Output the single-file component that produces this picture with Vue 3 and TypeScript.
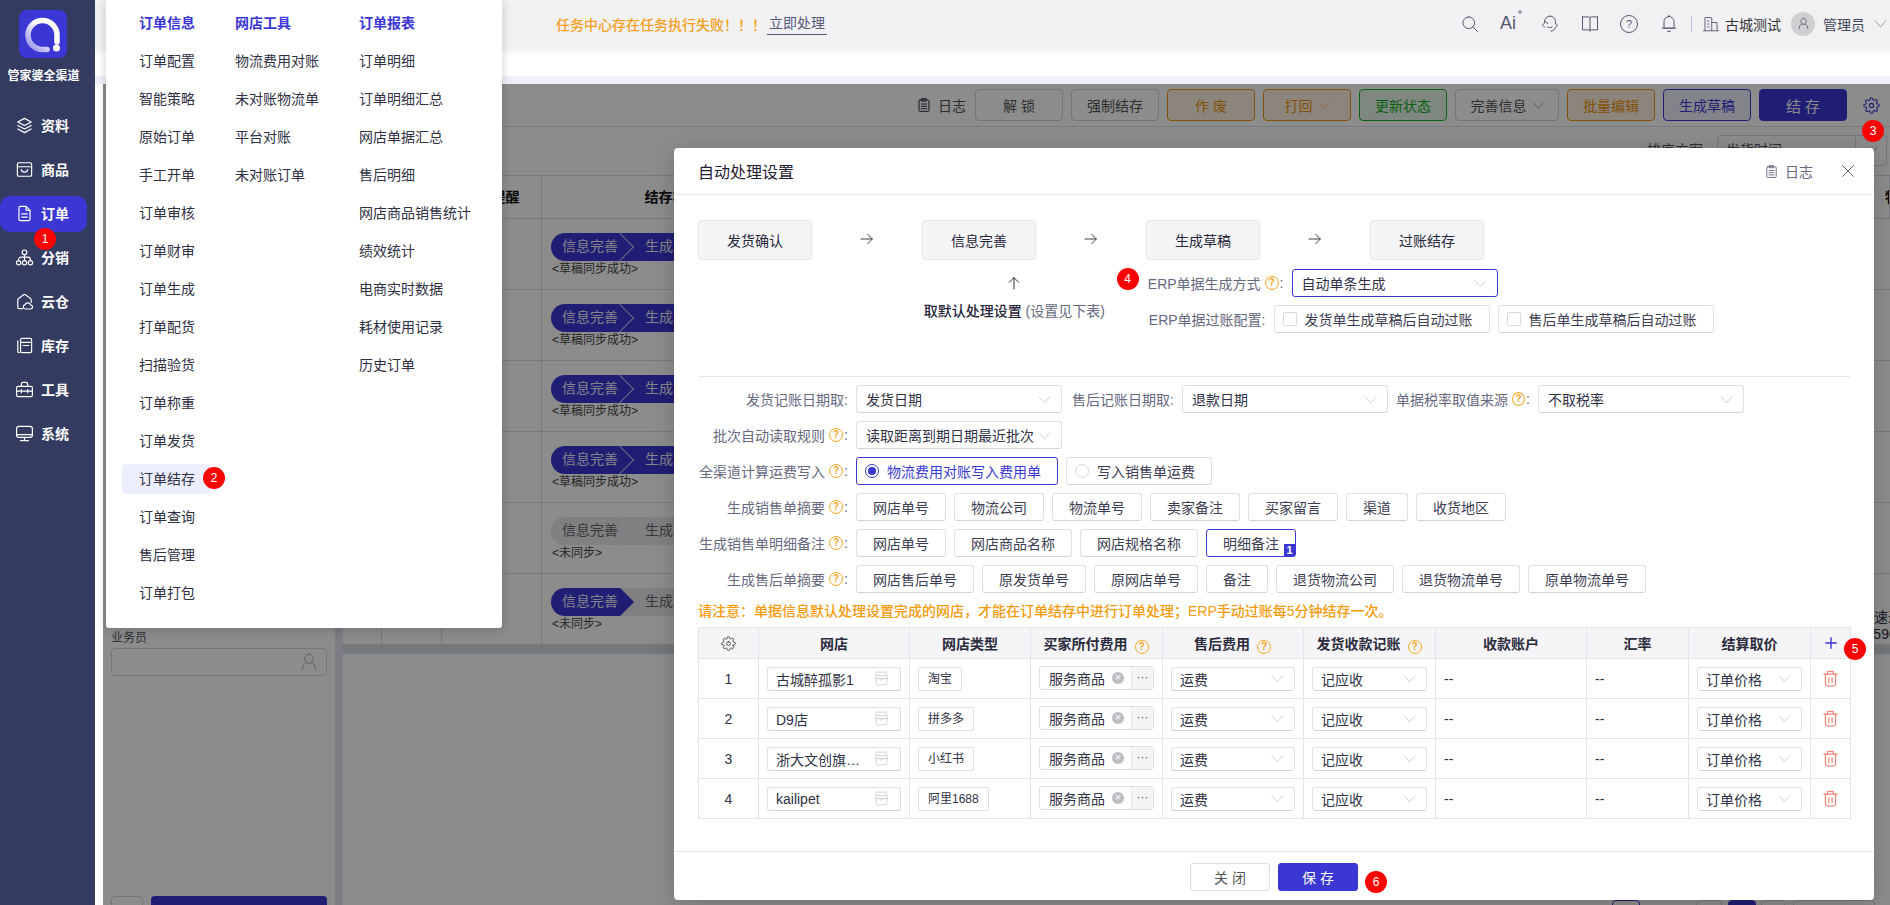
<script setup lang="ts">
import { ref } from 'vue';

const icons: Record<string, string> = {
  layers: 'M12 3 3.5 7.5 12 12l8.5-4.5L12 3Z M3.5 12 12 16.5 20.5 12 M3.5 16.5 12 21l8.5-4.5',
  goods: 'M5 3.500h14a2 2 0 0 1 2 2v13a2 2 0 0 1-2 2H5a2 2 0 0 1-2-2v-13a2 2 0 0 1 2-2Z M3 8.500h18 M8 12c.6 4.500 7.400 4.500 8 0',
  order: 'M7 3h7l5 5v11a2 2 0 0 1-2 2H7a2 2 0 0 1-2-2V5a2 2 0 0 1 2-2Z M14 3v5h5 M8.500 12.500h7 M8.500 16.500h7',
  org: 'M12 2.500a3 3 0 1 1 0 6 3 3 0 0 1 0-6Z M12 8.500v7.500 M4.500 16v-1.500a3 3 0 0 1 3-3h9a3 3 0 0 1 3 3V16 M4.500 16a2.700 2.700 0 1 1 0 5.400 2.700 2.700 0 0 1 0-5.400Z M12 16a2.700 2.700 0 1 1 0 5.400 2.700 2.700 0 0 1 0-5.400Z M19.500 16a2.700 2.700 0 1 1 0 5.400 2.700 2.700 0 0 1 0-5.400Z',
  cloud: 'M9.500 21H5.500a2 2 0 0 1-2-2V10a2 2 0 0 1 .8-1.600l6.500-5a2 2 0 0 1 2.400 0l6.500 5a2 2 0 0 1 .8 1.600v3 M13 21.500h6.500a2.500 2.500 0 0 0 .3-5 3.800 3.800 0 0 0-7.200-.5 2.800 2.800 0 0 0 .4 5.500Z',
  stock: 'M9 3h10a2 2 0 0 1 2 2v14a2 2 0 0 1-2 2H9a2 2 0 0 1-2-2V5a2 2 0 0 1 2-2Z M3.500 6v13a2 2 0 0 0 2 2 M7 8h14 M10.500 12h7',
  tool: 'M4 8h16a2 2 0 0 1 2 2v9a2 2 0 0 1-2 2H4a2 2 0 0 1-2-2v-9a2 2 0 0 1 2-2Z M8 8V5a2 2 0 0 1 2-2h4a2 2 0 0 1 2 2v3 M2 14h20 M8 12v4 M16 12v4',
  monitor: 'M5 3h14a3 3 0 0 1 3 3v8a3 3 0 0 1-3 3H5a3 3 0 0 1-3-3V6a3 3 0 0 1 3-3Z M2.500 13.500h19 M7 21h10 M12 17v4',
  search: 'M10.500 3.500a7 7 0 1 1 0 14 7 7 0 0 1 0-14Z M15.500 15.500 21 21',
  spark: 'M18 2.500v7 M14.500 6h7',
  headset: 'M12 2.500a6.500 6.500 0 0 1 6.500 6.500v2.500c1.300.3 2 1.100 2 2.200s-.9 2.100-2 2.300c-.8 3-3 4.500-5.500 4.500 M12 2.500A6.500 6.500 0 0 0 5.500 9c1.500 0 3 1 3.500 2.500 M5.500 9v2c-1.300.3-2 1.200-2 2.300s.9 2 2 2.200 M9 15.500c1.500 1.200 4 1.200 5.500 0',
  book: 'M3 3.500h7.500c.9 0 1.500.6 1.500 1.500v15.500c0-1-.7-1.500-1.500-1.500H3V3.500Z M21 3.500h-7.500c-.9 0-1.500.6-1.500 1.500 M21 3.500V19h-7.500c-.8 0-1.500.5-1.500 1.500',
  bell: 'M12 3a6 6 0 0 1 6 6v8H6V9a6 6 0 0 1 6-6Z M4 17h16 M10 20.500c.8 1 3.200 1 4 0 M12 1.500V3',
  building: 'M4 21V3.500h9V21 M2 21h20 M13 10h7v11 M7.500 8h2 M7.500 12h2 M7.500 16h2',
  user: 'M12 2.500c2.800 0 5 2.300 5 5.500s-2.200 5.500-5 5.500S7 11.200 7 8s2.200-5.500 5-5.500Z M9 13c-3 1-5 3.500-5 8.500 M15 13c3 1 5 3.500 5 8.500',
  gear: 'M12 9a3 3 0 1 0 0 6 3 3 0 0 0 0-6Z M19.400 15a1.650 1.650 0 0 0 .33 1.820l.06.06a2 2 0 1 1-2.830 2.830l-.06-.06a1.650 1.650 0 0 0-2.800 1.170V21a2 2 0 0 1-4 0v-.09a1.650 1.650 0 0 0-2.800-1.120l-.06.06a2 2 0 1 1-2.830-2.830l.06-.06a1.650 1.650 0 0 0-1.170-2.800H3a2 2 0 0 1 0-4h.09a1.650 1.650 0 0 0 1.120-2.800l-.06-.06a2 2 0 1 1 2.830-2.830l.06.06a1.650 1.650 0 0 0 2.800-1.170V3a2 2 0 0 1 4 0v.09a1.650 1.650 0 0 0 2.800 1.120l.06-.06a2 2 0 1 1 2.830 2.830l-.06.06a1.650 1.650 0 0 0 1.170 2.800H21a2 2 0 0 1 0 4h-.09a1.650 1.650 0 0 0-1.510 1.160Z',
  log: 'M6 4.500h12a1.500 1.500 0 0 1 1.500 1.500v14a1.500 1.500 0 0 1-1.500 1.500H6A1.500 1.500 0 0 1 4.500 20V6A1.500 1.500 0 0 1 6 4.500Z M9 2.500h6v3.500H9z M8 10.500h8 M8 14h8 M8 17.500h8',
  close: 'M4 4l16 16 M20 4 4 20',
  right: 'M3 12h17 M13 5l7 7-7 7',
  up: 'M12 21V4 M5 11l7-7 7 7',
  shop: 'M6.500 3h11a2 2 0 0 1 2 2v3H4.500V5a2 2 0 0 1 2-2Z M4.500 8 3 12h18l-1.500-4 M4.500 12v7a2 2 0 0 0 2 2h11a2 2 0 0 0 2-2v-7 M9 12c.3 3 5.700 3 6 0',
  trash: 'M3.500 6.500h17 M8.500 6.500V3h7v3.500 M5.500 6.500V19a2.500 2.500 0 0 0 2.500 2.500h8a2.500 2.500 0 0 0 2.500-2.500V6.500 M10 11v6 M14 11v6',
  plus: 'M12 3v18 M3 12h18',
  chev: 'M2 7l10 11L22 7',
};

const menuCols = [
  { title: '订单信息', items: ['订单配置', '智能策略', '原始订单', '手工开单', '订单审核', '订单财审', '订单生成', '打单配货', '扫描验货', '订单称重', '订单发货', '订单结存', '订单查询', '售后管理', '订单打包'] },
  { title: '网店工具', items: ['物流费用对账', '未对账物流单', '平台对账', '未对账订单'] },
  { title: '订单报表', items: ['订单明细', '订单明细汇总', '网店单据汇总', '售后明细', '网店商品销售统计', '绩效统计', '电商实时数据', '耗材使用记录', '历史订单'] },
];

const nav = [
  { label: '资料', icon: 'layers' },
  { label: '商品', icon: 'goods' },
  { label: '订单', icon: 'order', active: true },
  { label: '分销', icon: 'org' },
  { label: '云仓', icon: 'cloud' },
  { label: '库存', icon: 'stock' },
  { label: '工具', icon: 'tool' },
  { label: '系统', icon: 'monitor' },
];

const actions = [
  { label: '解 锁', kind: 'plain' },
  { label: '强制结存', kind: 'plain' },
  { label: '作 废', kind: 'warn' },
  { label: '打回', kind: 'warn', caret: true },
  { label: '更新状态', kind: 'ok' },
  { label: '完善信息', kind: 'plain', caret: true, wide: true },
  { label: '批量编辑', kind: 'warn' },
  { label: '生成草稿', kind: 'line' },
  { label: '结 存', kind: 'solid' },
];

const bgRows = [
  { state: 'done', note: '<草稿同步成功>' },
  { state: 'done', note: '<草稿同步成功>' },
  { state: 'done', note: '<草稿同步成功>' },
  { state: 'done', note: '<草稿同步成功>' },
  { state: 'idle', note: '<未同步>' },
  { state: 'half', note: '<未同步>' },
];

const flowSteps = ['发货确认', '信息完善', '生成草稿', '过账结存'];

const chipRows = [
  { label: '生成销售单摘要', items: ['网店单号', '物流公司', '物流单号', '卖家备注', '买家留言', '渠道', '收货地区'], picked: '' },
  { label: '生成销售单明细备注', items: ['网店单号', '网店商品名称', '网店规格名称', '明细备注'], picked: '明细备注' },
  { label: '生成售后单摘要', items: ['网店售后单号', '原发货单号', '原网店单号', '备注', '退货物流公司', '退货物流单号', '原单物流单号'], picked: '' },
];

const shops = ref([
  { no: 1, name: '古城醉孤影1', type: '淘宝' },
  { no: 2, name: 'D9店', type: '拼多多' },
  { no: 3, name: '浙大文创旗舰店', type: '小红书' },
  { no: 4, name: 'kailipet', type: '阿里1688' },
]);
</script>

<template>
  <div class="app">
    <aside class="side">
      <div class="logo">
        <svg viewBox="0 0 48 48" width="48" height="48">
          <defs>
            <linearGradient id="ring" x1="0" y1="1" x2="1" y2="0">
              <stop offset="0" stop-color="#8f8ce6" />
              <stop offset=".6" stop-color="#fff" />
            </linearGradient>
          </defs>
          <path d="M38 32V25A14.500 14.500 0 1 0 23.500 39.500H28" fill="none" stroke="url(#ring)" stroke-width="5.500" stroke-linecap="round" />
          <circle cx="37.500" cy="38" r="3.500" fill="#fff" />
        </svg>
      </div>
      <div class="brand">管家婆全渠道</div>
      <nav class="nav">
        <div v-for="n in nav" :key="n.label" class="nav-item" :class="{ active: n.active }">
          <svg class="ic nav-ic" viewBox="0 0 24 24"><path :d="icons[n.icon]" /></svg>
          <span>{{ n.label }}</span>
        </div>
      </nav>
    </aside>

    <div class="main">
      <header class="topbar">
        <div class="alert">任务中心存在任务执行失败！！！</div>
        <a class="alert-link">立即处理</a>
        <div class="top-right">
          <svg class="ic top-ic" viewBox="0 0 24 24"><path :d="icons.search" /></svg>
          <span class="ai">Ai<svg class="ic spark" viewBox="0 0 24 24"><path :d="icons.spark" /></svg></span>
          <svg class="ic top-ic" viewBox="0 0 24 24"><path :d="icons.headset" /></svg>
          <svg class="ic top-ic" viewBox="0 0 24 24"><path :d="icons.book" /></svg>
          <span class="help-big">?</span>
          <svg class="ic top-ic bell" viewBox="0 0 24 24"><path :d="icons.bell" /></svg>
          <span class="top-div"></span>
          <svg class="ic org-ic" viewBox="0 0 24 24"><path :d="icons.building" /></svg>
          <span class="org-name">古城测试</span>
          <span class="avatar"><svg class="ic" viewBox="0 0 24 24"><path :d="icons.user" /></svg></span>
          <span class="user-name">管理员</span>
          <svg class="ic chev user-chev" viewBox="0 0 24 24"><path :d="icons.chev" /></svg>
        </div>
      </header>
      <div class="tabs"></div>
      <div class="strip"></div>

      <div class="work">
        <section class="filters">
          <div class="f-label">业务员</div>
          <div class="f-input"><svg class="ic" viewBox="0 0 24 24"><path :d="icons.user" /></svg></div>
          <div class="f-actions">
            <span class="f-small"></span>
            <span class="f-query"></span>
          </div>
        </section>
        <div class="splitter"></div>
        <section class="board">
          <div class="toolbar">
            <svg class="ic log-ic" viewBox="0 0 24 24"><path :d="icons.log" /></svg>
            <span class="log-text">日志</span>
            <button v-for="a in actions" :key="a.label" class="act" :class="[a.kind, { wide: a.wide }]">
              {{ a.label }}
              <svg v-if="a.caret" class="ic chev act-chev" viewBox="0 0 24 24"><path :d="icons.chev" /></svg>
            </button>
            <svg class="ic gear" viewBox="0 0 24 24"><path :d="icons.gear" /></svg>
          </div>
          <div class="sortbar">
            <span>排序方案</span>
            <div class="sort-sel"><span>发货时间</span></div>
            <div class="sort-add"><svg class="ic chev" viewBox="0 0 24 24"><path :d="icons.chev" /></svg></div>
          </div>
          <div class="grid-head grid-cols">
            <div></div><div></div>
            <div class="gh">异常提醒</div>
            <div class="gh">结存状态</div>
            <div></div>
            <div class="gh gh-last">物流信息</div>
          </div>
          <div v-for="(r, i) in bgRows" :key="i" class="grid-row grid-cols">
            <div></div><div></div><div></div>
            <div class="state-cell">
              <div class="pill" :class="r.state">
                <span class="seg first">信息完善</span>
                <span class="seg next">生成草稿</span>
              </div>
              <div class="pill-note">{{ r.note }}</div>
            </div>
            <div></div>
            <div class="last-cell">
              <template v-if="i === 5">
                <div>中通速递</div>
                <div class="last-num">7895901</div>
              </template>
            </div>
          </div>
          <div class="hscroll"></div>
          <div class="pager">
            <span class="pg pg-line"></span>
            <span class="pg pg-gray"></span>
            <span class="pg pg-solid"></span>
            <span class="pg pg-gray2"></span>
            <span class="pg pg-size"></span>
          </div>
        </section>
        <div class="mask"></div>
      </div>
    </div>

    <!-- dropdown from the side nav -->
    <div class="menu">
      <div v-for="c in menuCols" :key="c.title" class="menu-col">
        <div class="menu-title">{{ c.title }}</div>
        <div v-for="m in c.items" :key="m" class="menu-item" :class="{ picked: m === '订单结存' }">{{ m }}</div>
      </div>
    </div>

    <div class="modal">
      <div class="m-head">
        <span class="m-title">自动处理设置</span>
        <svg class="ic m-log" viewBox="0 0 24 24"><path :d="icons.log" /></svg>
        <span class="m-log-text">日志</span>
        <svg class="ic m-close" viewBox="0 0 24 24"><path :d="icons.close" /></svg>
      </div>

      <div class="m-body">
        <div class="flow">
          <template v-for="(s, i) in flowSteps" :key="s">
            <div class="flow-box">{{ s }}</div>
            <div v-if="i < 3" class="flow-arrow"><svg class="ic" viewBox="0 0 24 24"><path :d="icons.right" /></svg></div>
          </template>
        </div>
        <div class="flow-sub">
          <div class="default-col">
            <svg class="ic up" viewBox="0 0 24 24"><path :d="icons.up" /></svg>
            <div class="default-text"><b>取默认处理设置</b> (设置见下表)</div>
          </div>
          <div class="erp">
            <div class="erp-row">
              <span class="lab erp-lab1">ERP单据生成方式<i class="help">?</i>:</span>
              <div class="sel sel-on erp-sel">自动单条生成<svg class="ic chev" viewBox="0 0 24 24"><path :d="icons.chev" /></svg></div>
              <span class="badge b4">4</span>
            </div>
            <div class="erp-row">
              <span class="lab erp-lab2">ERP单据过账配置:</span>
              <label class="chip check"><i class="box"></i>发货单生成草稿后自动过账</label>
              <label class="chip check"><i class="box"></i>售后单生成草稿后自动过账</label>
            </div>
          </div>
        </div>
        <div class="rule"></div>

        <div class="form-row">
          <span class="lab w-main">发货记账日期取:</span>
          <div class="sel w-sel">发货日期<svg class="ic chev" viewBox="0 0 24 24"><path :d="icons.chev" /></svg></div>
          <span class="lab w-b">售后记账日期取:</span>
          <div class="sel w-sel">退款日期<svg class="ic chev" viewBox="0 0 24 24"><path :d="icons.chev" /></svg></div>
          <span class="lab w-c">单据税率取值来源<i class="help">?</i>:</span>
          <div class="sel w-sel">不取税率<svg class="ic chev" viewBox="0 0 24 24"><path :d="icons.chev" /></svg></div>
        </div>
        <div class="form-row">
          <span class="lab w-main">批次自动读取规则<i class="help">?</i>:</span>
          <div class="sel w-sel">读取距离到期日期最近批次<svg class="ic chev" viewBox="0 0 24 24"><path :d="icons.chev" /></svg></div>
        </div>
        <div class="form-row">
          <span class="lab w-main">全渠道计算运费写入<i class="help">?</i>:</span>
          <label class="chip radio on"><i class="dot"></i>物流费用对账写入费用单</label>
          <label class="chip radio"><i class="dot"></i>写入销售单运费</label>
        </div>
        <div v-for="row in chipRows" :key="row.label" class="form-row">
          <span class="lab w-main">{{ row.label }}<i class="help">?</i>:</span>
          <span v-for="c in row.items" :key="c" class="chip" :class="{ on: c === row.picked }">
            {{ c }}<em v-if="c === row.picked" class="corner">1</em>
          </span>
        </div>

        <p class="notice">请注意：单据信息默认处理设置完成的网店，才能在订单结存中进行订单处理；ERP手动过账每5分钟结存一次。</p>

        <table class="shops">
          <colgroup>
            <col style="width: 60px" /><col style="width: 151px" /><col style="width: 121px" /><col style="width: 132px" /><col style="width: 141px" />
            <col style="width: 132px" /><col style="width: 151px" /><col style="width: 102px" /><col style="width: 122px" /><col style="width: 40px" />
          </colgroup>
          <thead>
            <tr>
              <th><svg class="ic th-gear" viewBox="0 0 24 24"><path :d="icons.gear" /></svg></th>
              <th>网店</th>
              <th>网店类型</th>
              <th>买家所付费用<i class="help th-help">?</i></th>
              <th>售后费用<i class="help th-help">?</i></th>
              <th>发货收款记账<i class="help th-help">?</i></th>
              <th>收款账户</th>
              <th>汇率</th>
              <th>结算取价</th>
              <th class="plus-th">
                <svg class="ic plus" viewBox="0 0 24 24"><path :d="icons.plus" /></svg>
                <span class="badge b5">5</span>
              </th>
            </tr>
          </thead>
          <tbody>
            <tr v-for="s in shops" :key="s.no">
              <td class="ctr">{{ s.no }}</td>
              <td>
                <div class="sel t-sel">
                  <span class="ell">{{ s.name }}</span>
                  <svg class="ic shop" viewBox="0 0 24 24"><path :d="icons.shop" /></svg>
                </div>
              </td>
              <td><span class="type-tag">{{ s.type }}</span></td>
              <td>
                <div class="fee">
                  <span class="fee-text">服务商品</span>
                  <span class="clear">×</span>
                  <span class="more">···</span>
                </div>
              </td>
              <td><div class="sel t-sel">运费<svg class="ic chev" viewBox="0 0 24 24"><path :d="icons.chev" /></svg></div></td>
              <td><div class="sel t-sel">记应收<svg class="ic chev" viewBox="0 0 24 24"><path :d="icons.chev" /></svg></div></td>
              <td>--</td>
              <td>--</td>
              <td><div class="sel t-sel">订单价格<svg class="ic chev" viewBox="0 0 24 24"><path :d="icons.chev" /></svg></div></td>
              <td class="ctr"><svg class="ic trash" viewBox="0 0 24 24"><path :d="icons.trash" /></svg></td>
            </tr>
          </tbody>
        </table>
      </div>

      <div class="m-foot">
        <button class="f-btn">关 闭</button>
        <button class="f-btn primary">保 存<span class="badge b6">6</span></button>
      </div>
    </div>

    <span class="badge b1">1</span>
    <span class="badge b2">2</span>
    <span class="badge b3">3</span>
  </div>
</template>

<style>
html,
body {
  margin: 0;
  overflow: hidden;
}
</style>

<style scoped>
.app {
  position: relative;
  display: flex;
  width: 1890px;
  height: 905px;
  overflow: hidden;
  font-family: "Liberation Sans", "Noto Sans CJK SC", sans-serif;
  font-size: 14px;
  color: #2f3044;
  background: #fff;
}
.ic {
  display: block;
  width: 16px;
  height: 16px;
  fill: none;
  stroke: currentColor;
  stroke-width: 1.6;
  stroke-linecap: round;
  stroke-linejoin: round;
  flex: none;
}
.chev {
  width: 13px;
  height: 13px;
  stroke-width: 1.2;
  color: #b9bac4;
}
i,
em {
  font-style: normal;
}

/* side nav */
.side {
  width: 95px;
  flex: none;
  background: #333b61;
  color: #fff;
  padding-right: 8px;
  box-sizing: border-box;
}
.logo {
  width: 48px;
  height: 48px;
  margin: 10px 0 0 19px;
  background: #3a37d4;
  border-radius: 8px;
}
.brand {
  margin-top: 12px;
  text-align: center;
  font-size: 12px;
  font-weight: 700;
  line-height: 12px;
}
.nav {
  margin-top: 26px;
  display: flex;
  flex-direction: column;
  gap: 8px;
}
.nav-item {
  height: 36px;
  box-sizing: border-box;
  display: flex;
  align-items: center;
  gap: 7px;
  padding: 0 0 2px 15px;
  border-radius: 10px;
  font-weight: 700;
}
.nav-item.active {
  background: #3a37d4;
}
.nav-ic {
  width: 19px;
  height: 19px;
  stroke-width: 1.5;
}

/* top */
.main {
  flex: 1;
  min-width: 0;
  display: flex;
  flex-direction: column;
}
.topbar {
  height: 47px;
  flex: none;
  display: flex;
  align-items: center;
  background: #f1f1f4;
  padding-left: 461px;
  padding-right: 3px;
}
.alert {
  color: #f5a01c;
  font-size: 14px;
  width: 211px;
  font-weight: 500;
  white-space: nowrap;
}
.alert-link {
  color: #56587a;
  width: 60px;
  line-height: 21px;
  margin-top: 1px;
  text-align: center;
  border-bottom: 1px solid #56587a;
}
.top-right {
  margin-left: auto;
  display: flex;
  align-items: center;
  color: #555770;
}
.top-ic {
  width: 20px;
  height: 20px;
  stroke-width: 1.2;
  margin-right: 20px;
}
.top-ic.bell {
  margin-right: 12px;
}
.ai {
  position: relative;
  font-size: 18px;
  width: 40px;
  color: #555770;
}
.spark {
  position: absolute;
  left: 11px;
  top: -4px;
  width: 12px;
  height: 12px;
  stroke-width: 1.6;
}
.help-big {
  width: 16px;
  height: 16px;
  border: 1.2px solid #555770;
  border-radius: 50%;
  font-size: 11px;
  line-height: 16px;
  text-align: center;
  margin-right: 21px;
}
.top-div {
  width: 1px;
  height: 16px;
  background: #b8bce0;
  margin-right: 10px;
}
.org-ic {
  width: 18px;
  height: 18px;
  stroke-width: 1.2;
  margin-right: 5px;
}
.org-name {
  color: #333;
  margin-right: 10px;
}
.avatar {
  width: 24px;
  height: 24px;
  border-radius: 50%;
  background: #cfcfd2;
  display: flex;
  align-items: center;
  justify-content: center;
  margin-right: 8px;
}
.avatar .ic {
  width: 13px;
  height: 13px;
  stroke-width: 1.5;
}
.user-name {
  color: #44465c;
  margin-right: 9px;
}
.user-chev {
  color: #777;
}
.tabs {
  height: 29px;
  flex: none;
  background: linear-gradient(#f1f1f4, #fff 8px);
}
.strip {
  height: 8px;
  flex: none;
  background: #eef0fd;
}

/* page behind the mask */
.work {
  position: relative;
  flex: 1;
  min-height: 0;
  display: flex;
  margin-left: 8px;
  background: #fff;
}
.mask {
  position: absolute;
  inset: 0;
  z-index: 2;
  background: rgba(0, 0, 0, 0.45);
}
.filters {
  width: 232px;
  flex: none;
  box-sizing: border-box;
  padding: 545px 8px 0;
  display: flex;
  flex-direction: column;
}
.f-label {
  flex: none;
  font-size: 12px;
  line-height: 18px;
  color: #555;
  margin-bottom: 1px;
}
.f-input {
  height: 28px;
  flex: none;
  box-sizing: border-box;
  border: 1px solid #d8d8de;
  border-radius: 4px;
  display: flex;
  align-items: center;
  justify-content: flex-end;
  padding-right: 7px;
  color: #aaa;
}
.f-input .ic {
  width: 20px;
  height: 20px;
  stroke-width: 1.1;
}
.f-actions {
  margin-top: 220px;
  flex: none;
  display: flex;
  gap: 8px;
}
.f-small {
  width: 32px;
  height: 32px;
  box-sizing: border-box;
  border: 1px solid #d8d8de;
  border-radius: 4px;
}
.f-query {
  flex: 1;
  height: 32px;
  background: #3a37d4;
  border-radius: 4px;
}
.splitter {
  width: 8px;
  flex: none;
  background: #e3e3f2;
}
.board {
  flex: 1;
  min-width: 0;
  display: flex;
  flex-direction: column;
}
.toolbar {
  height: 43px;
  flex: none;
  box-sizing: border-box;
  display: flex;
  align-items: center;
  justify-content: flex-end;
  gap: 8px;
  padding-right: 10px;
  border-bottom: 1px solid #dcdce4;
}
.log-ic {
  stroke-width: 1.5;
  margin-right: -2px;
}
.log-text {
  margin-right: 1px;
  color: #555;
}
.act {
  width: 88px;
  height: 32px;
  padding: 0;
  display: inline-flex;
  align-items: center;
  justify-content: center;
  gap: 6px;
  font: inherit;
  border-radius: 4px;
  border: 1px solid #d4d4dc;
  background: #fff;
  color: #555;
}
.act.wide {
  width: 104px;
}
.act.warn {
  border-color: #ee9310;
  color: #ee9310;
  background: #fdf2e0;
}
.act.ok {
  border-color: #17b425;
  color: #14b01f;
  background: #e6f8ea;
}
.act.line {
  border-color: #3a37d4;
  color: #3a37d4;
  background: #eeeefc;
}
.act.solid {
  border-color: #3a37d4;
  color: #fff;
  background: #3a37d4;
  font-size: 15px;
}
.act-chev {
  color: inherit;
  width: 11px;
  height: 11px;
}
.gear {
  width: 17px;
  height: 17px;
  color: #3a37d4;
  stroke-width: 1.5;
  margin-left: 8px;
}
.sortbar {
  height: 49px;
  flex: none;
  box-sizing: border-box;
  display: flex;
  align-items: flex-start;
  justify-content: flex-end;
  padding: 8px 3px 0 0;
  border-bottom: 1px solid #dcdce4;
  color: #555;
}
.sortbar > span {
  line-height: 31px;
  margin-right: 14px;
}
.sort-sel {
  width: 139px;
  height: 31px;
  box-sizing: border-box;
  border: 1px solid #d8d8de;
  border-radius: 4px 0 0 4px;
  padding-left: 8px;
  line-height: 29px;
}
.sort-add {
  width: 31px;
  height: 31px;
  box-sizing: border-box;
  border: 1px solid #d8d8de;
  border-left: 0;
  border-radius: 0 4px 4px 0;
  display: flex;
  align-items: center;
  justify-content: center;
}
.sort-add .chev {
  color: #777;
}
.grid-cols {
  display: grid;
  grid-template-columns: 39px 60px 100px 262px 1036px 50px;
}
.grid-cols > div {
  border-right: 1px solid #dcdce4;
  box-sizing: border-box;
  min-width: 0;
}
.grid-head {
  height: 43px;
  flex: none;
  box-sizing: border-box;
  border-bottom: 1px solid #dcdce4;
  font-weight: 700;
  color: #111;
  white-space: nowrap;
}
.gh {
  line-height: 42px;
  text-align: center;
  overflow: hidden;
}
.gh-last {
  text-align: left;
  padding-left: 45px;
}
.grid-row {
  height: 71px;
  flex: none;
  box-sizing: border-box;
  border-bottom: 1px solid #dcdce4;
  overflow: hidden;
}
.state-cell {
  padding: 14px 0 0 9px;
}
.pill {
  position: relative;
  display: flex;
  height: 28px;
  width: 300px;
  border-radius: 14px 0 0 14px;
  overflow: hidden;
  background: #e9e9ee;
  color: #666;
  line-height: 27px;
}
.seg {
  white-space: nowrap;
}
.seg.first {
  position: relative;
  width: 69px;
  flex: none;
  box-sizing: border-box;
  padding-left: 11px;
  z-index: 1;
}
.seg.first::after {
  content: "";
  position: absolute;
  left: 59px;
  top: 4px;
  width: 20px;
  height: 20px;
  box-sizing: border-box;
  transform: rotate(45deg);
  border: solid #f4f4f8;
  border-width: 1px 1px 0 0;
  z-index: -1;
}
.seg.next {
  padding-left: 25px;
}
.pill.done {
  background: #3a37d4;
  color: #eeeefc;
}
.pill.done .seg.first::after {
  border-color: #c9c8f4;
}
.pill.half .seg.first {
  background: #3a37d4;
  color: #eeeefc;
}
.pill.half .seg.first::after {
  background: #3a37d4;
  border: 0;
}
.pill-note {
  font-size: 12px;
  line-height: 16px;
  color: #444;
  margin-left: 1px;
}
.last-cell {
  padding: 35px 0 0 6px;
  line-height: 17px;
  white-space: nowrap;
  border-right: 0 !important;
}
.last-num {
  margin-left: 4px;
}
.hscroll {
  height: 9px;
  flex: none;
  background: #d5dae0;
}
.pager {
  margin-top: auto;
  margin-bottom: -23px;
  height: 28px;
  flex: none;
  position: relative;
}
.pg {
  position: absolute;
  top: 0;
  height: 28px;
  box-sizing: border-box;
  border-radius: 4px;
  border: 1px solid #d8d8de;
}
.pg-line {
  left: 1269px;
  width: 28px;
  border-color: #3a37d4;
}
.pg-gray {
  left: 1353px;
  width: 26px;
}
.pg-solid {
  left: 1385px;
  width: 28px;
  background: #3a37d4;
  border-color: #3a37d4;
}
.pg-gray2 {
  left: 1418px;
  width: 24px;
}
.pg-size {
  left: 1450px;
  width: 82px;
}

/* dropdown */
.menu {
  position: absolute;
  left: 106px;
  top: 0;
  z-index: 3;
  width: 396px;
  height: 628px;
  box-sizing: border-box;
  padding: 4px 0 0 33px;
  display: flex;
  background: #fff;
  border-radius: 0 0 3px 3px;
  box-shadow: 0 2px 12px rgba(0, 0, 0, 0.18);
}
.menu-col:nth-child(1) {
  width: 96px;
}
.menu-col:nth-child(2) {
  width: 124px;
}
.menu-title,
.menu-item {
  height: 38px;
  line-height: 38px;
  white-space: nowrap;
}
.menu-title {
  color: #3a37d4;
  font-weight: 700;
}
.menu-item.picked {
  position: relative;
  z-index: 0;
}
.menu-item.picked::before {
  content: "";
  position: absolute;
  left: -17px;
  top: 4px;
  width: 88px;
  height: 30px;
  border-radius: 4px;
  background: #eceefd;
  z-index: -1;
}

/* modal */
.modal {
  position: absolute;
  left: 674px;
  top: 148px;
  z-index: 3;
  width: 1200px;
  height: 752px;
  display: flex;
  flex-direction: column;
  background: #fff;
  border-radius: 4px;
  box-shadow: 0 4px 24px rgba(0, 0, 0, 0.18);
}
.m-head {
  height: 47px;
  flex: none;
  box-sizing: border-box;
  display: flex;
  align-items: center;
  padding: 0 18px 0 24px;
  border-bottom: 1px solid #e8e8ee;
}
.m-title {
  font-size: 16px;
  color: #1f2033;
  margin-right: auto;
}
.m-log {
  width: 15px;
  height: 15px;
  color: #666980;
  stroke-width: 1.5;
  margin-right: 6px;
}
.m-log-text {
  color: #666980;
  margin-right: 27px;
}
.m-close {
  width: 16px;
  height: 16px;
  color: #5b5d74;
  stroke-width: 1.5;
}
.m-body {
  flex: 1;
  min-height: 0;
  padding: 25px 24px 0;
}
.flow {
  display: flex;
  align-items: center;
}
.flow-box {
  width: 114px;
  height: 40px;
  flex: none;
  box-sizing: border-box;
  display: flex;
  align-items: center;
  justify-content: center;
  background: #f5f5f8;
  border: 1px solid #e6e6ec;
  border-radius: 3px;
  color: #26273a;
}
.flow-arrow {
  width: 110px;
  display: flex;
  justify-content: center;
  margin-top: -3px;
  color: #333;
}
.flow-arrow .ic {
  width: 16px;
  height: 16px;
  stroke-width: 1.4;
}
.flow-sub {
  display: flex;
  margin-top: 9px;
}
.default-col {
  margin-left: 200px;
  width: 249.500px;
  padding-right: 17px;
  box-sizing: border-box;
  display: flex;
  flex-direction: column;
  align-items: center;
  padding-top: 6px;
}
.up {
  width: 16px;
  height: 16px;
  color: #222;
  stroke-width: 1.4;
}
.default-text {
  margin-top: 10px;
  color: #666980;
  white-space: nowrap;
  line-height: 20px;
}
.default-text b {
  color: #26273a;
  font-weight: 500;
}
.erp {
  display: flex;
  flex-direction: column;
  gap: 8px;
}
.erp-row {
  position: relative;
  display: flex;
  align-items: center;
  gap: 8px;
  height: 28px;
}
.lab {
  display: inline-flex;
  align-items: center;
  justify-content: flex-end;
  color: #666980;
  white-space: nowrap;
  flex: none;
}
.erp-lab1 {
  width: 136px;
}
.erp-lab2 {
  width: 118px;
}
.help {
  display: inline-block;
  width: 14px;
  height: 14px;
  box-sizing: border-box;
  margin: 0 1px 0 4px;
  border: 1.3px solid #f5a623;
  border-radius: 50%;
  color: #f5a623;
  font-size: 10px;
  line-height: 12px;
  text-align: center;
  font-weight: 700;
}
.sel {
  height: 28px;
  box-sizing: border-box;
  display: flex;
  align-items: center;
  justify-content: space-between;
  padding: 0 10px 0 9px;
  border: 1px solid #dfdfe7;
  border-bottom-color: #d4d4dc;
  border-radius: 3px;
  background: #fff;
  white-space: nowrap;
  flex: none;
  color: #303146;
}
.sel-on {
  border-color: #3a37d4;
}
.erp-sel {
  width: 206px;
}
.w-sel {
  width: 206px;
}
.chip {
  position: relative;
  height: 28px;
  box-sizing: border-box;
  display: inline-flex;
  align-items: center;
  padding: 0 16px;
  border: 1px solid #dfdfe7;
  border-bottom-color: #d4d4dc;
  border-radius: 3px;
  color: #3c3d52;
  white-space: nowrap;
}
.chip.on {
  border-color: #3a37d4;
}
.chip.check,
.chip.radio {
  padding-left: 8px;
  gap: 8px;
}
.box {
  width: 14px;
  height: 14px;
  box-sizing: border-box;
  border: 1px solid #d8d8e0;
  border-radius: 2px;
}
.dot {
  position: relative;
  width: 14px;
  height: 14px;
  box-sizing: border-box;
  border: 1px solid #d8d8e0;
  border-radius: 50%;
}
.chip.radio.on {
  color: #3a37d4;
}
.chip.radio.on .dot {
  border-color: #3a37d4;
}
.chip.radio.on .dot::after {
  content: "";
  position: absolute;
  inset: 2px;
  border-radius: 50%;
  background: #3a37d4;
}
.corner {
  position: absolute;
  right: 0;
  bottom: 0;
  width: 11px;
  height: 12px;
  background: #3a37d4;
  color: #fff;
  font-size: 11px;
  font-weight: 700;
  line-height: 12px;
  text-align: center;
}
.rule {
  height: 1px;
  background: #e4e4ea;
  margin: 43px 0 8px;
}
.form-row {
  display: flex;
  align-items: center;
  gap: 8px;
  height: 28px;
  margin-bottom: 8px;
}
.w-main {
  width: 150px;
}
.w-b {
  width: 104px;
}
.w-c {
  width: 134px;
}
.notice {
  margin: 0;
  height: 20px;
  line-height: 20px;
  color: #f59a0c;
  font-weight: 500;
  white-space: nowrap;
}
.shops {
  width: 1152px;
  margin-top: 6px;
  table-layout: fixed;
  border-collapse: collapse;
}
.shops th,
.shops td {
  border: 1px solid #e4e4ec;
  padding: 0 8px;
  box-sizing: border-box;
}
.shops th {
  height: 31px;
  background: #f5f5f8;
  color: #2a2b3c;
  font-weight: 700;
  white-space: nowrap;
}
.shops td {
  height: 40px;
  color: #303146;
}
.th-gear {
  margin: 0 auto;
  width: 15px;
  height: 15px;
  color: #444;
  stroke-width: 1.5;
}
.th-help {
  margin-left: 7px;
  vertical-align: -1px;
}
.plus-th {
  position: relative;
  padding: 0 !important;
}
.plus {
  margin: 0 auto;
  width: 14px;
  height: 14px;
  color: #3a37d4;
  stroke-width: 2.4;
}
.ctr {
  text-align: center;
}
.t-sel {
  height: 24px;
  padding: 0 10px 0 8px;
}
.ell {
  overflow: hidden;
  text-overflow: ellipsis;
  white-space: nowrap;
}
.shop {
  width: 17px;
  height: 17px;
  color: #cfcfd6;
  stroke-width: 1.3;
  margin-left: 4px;
}
.type-tag {
  display: inline-block;
  height: 24px;
  line-height: 22px;
  box-sizing: border-box;
  padding: 0 9px;
  border: 1px solid #dfdfe7;
  border-radius: 2px;
  font-size: 12px;
  vertical-align: middle;
}
.fee {
  height: 24px;
  box-sizing: border-box;
  display: flex;
  align-items: center;
  margin-top: -2px;
  padding-left: 9px;
  border: 1px solid #dfdfe7;
  border-radius: 3px;
}
.fee-text {
  white-space: nowrap;
}
.clear {
  width: 12px;
  height: 12px;
  margin: 0 7px;
  border-radius: 50%;
  background: #bcbcc2;
  color: #fff;
  font-size: 11px;
  line-height: 11px;
  text-align: center;
  flex: none;
}
.more {
  margin-left: auto;
  width: 22px;
  align-self: stretch;
  background: #f5f5f8;
  border-left: 1px solid #e6e6ec;
  text-align: center;
  line-height: 20px;
  color: #555;
  font-size: 12px;
}
.trash {
  margin: 0 auto;
  width: 19px;
  height: 19px;
  color: #f4665a;
  stroke-width: 1.2;
}
.m-foot {
  height: 49px;
  flex: none;
  box-sizing: border-box;
  display: flex;
  align-items: center;
  justify-content: center;
  gap: 8px;
  border-top: 1px solid #e8e8ee;
  padding-top: 1px;
}
.f-btn {
  position: relative;
  width: 80px;
  height: 28px;
  padding: 0;
  font: inherit;
  color: #555;
  background: #fff;
  border: 1px solid #dcdce4;
  border-radius: 3px;
}
.f-btn.primary {
  background: #3a37d4;
  border-color: #3a37d4;
  color: #fff;
}

/* red step markers */
.badge {
  position: absolute;
  width: 22px;
  height: 22px;
  border-radius: 50%;
  background: #ff0000;
  color: #fff;
  font-size: 12px;
  font-weight: 400;
  line-height: 22px;
  text-align: center;
  z-index: 5;
}
.b1 {
  left: 34px;
  top: 228px;
}
.b2 {
  left: 203px;
  top: 467px;
}
.b3 {
  left: 1862px;
  top: 120px;
}
.b4 {
  left: -31px;
  top: -1px;
}
.b5 {
  left: 33px;
  top: 10px;
}
.b6 {
  left: 86px;
  top: 7px;
}
</style>
